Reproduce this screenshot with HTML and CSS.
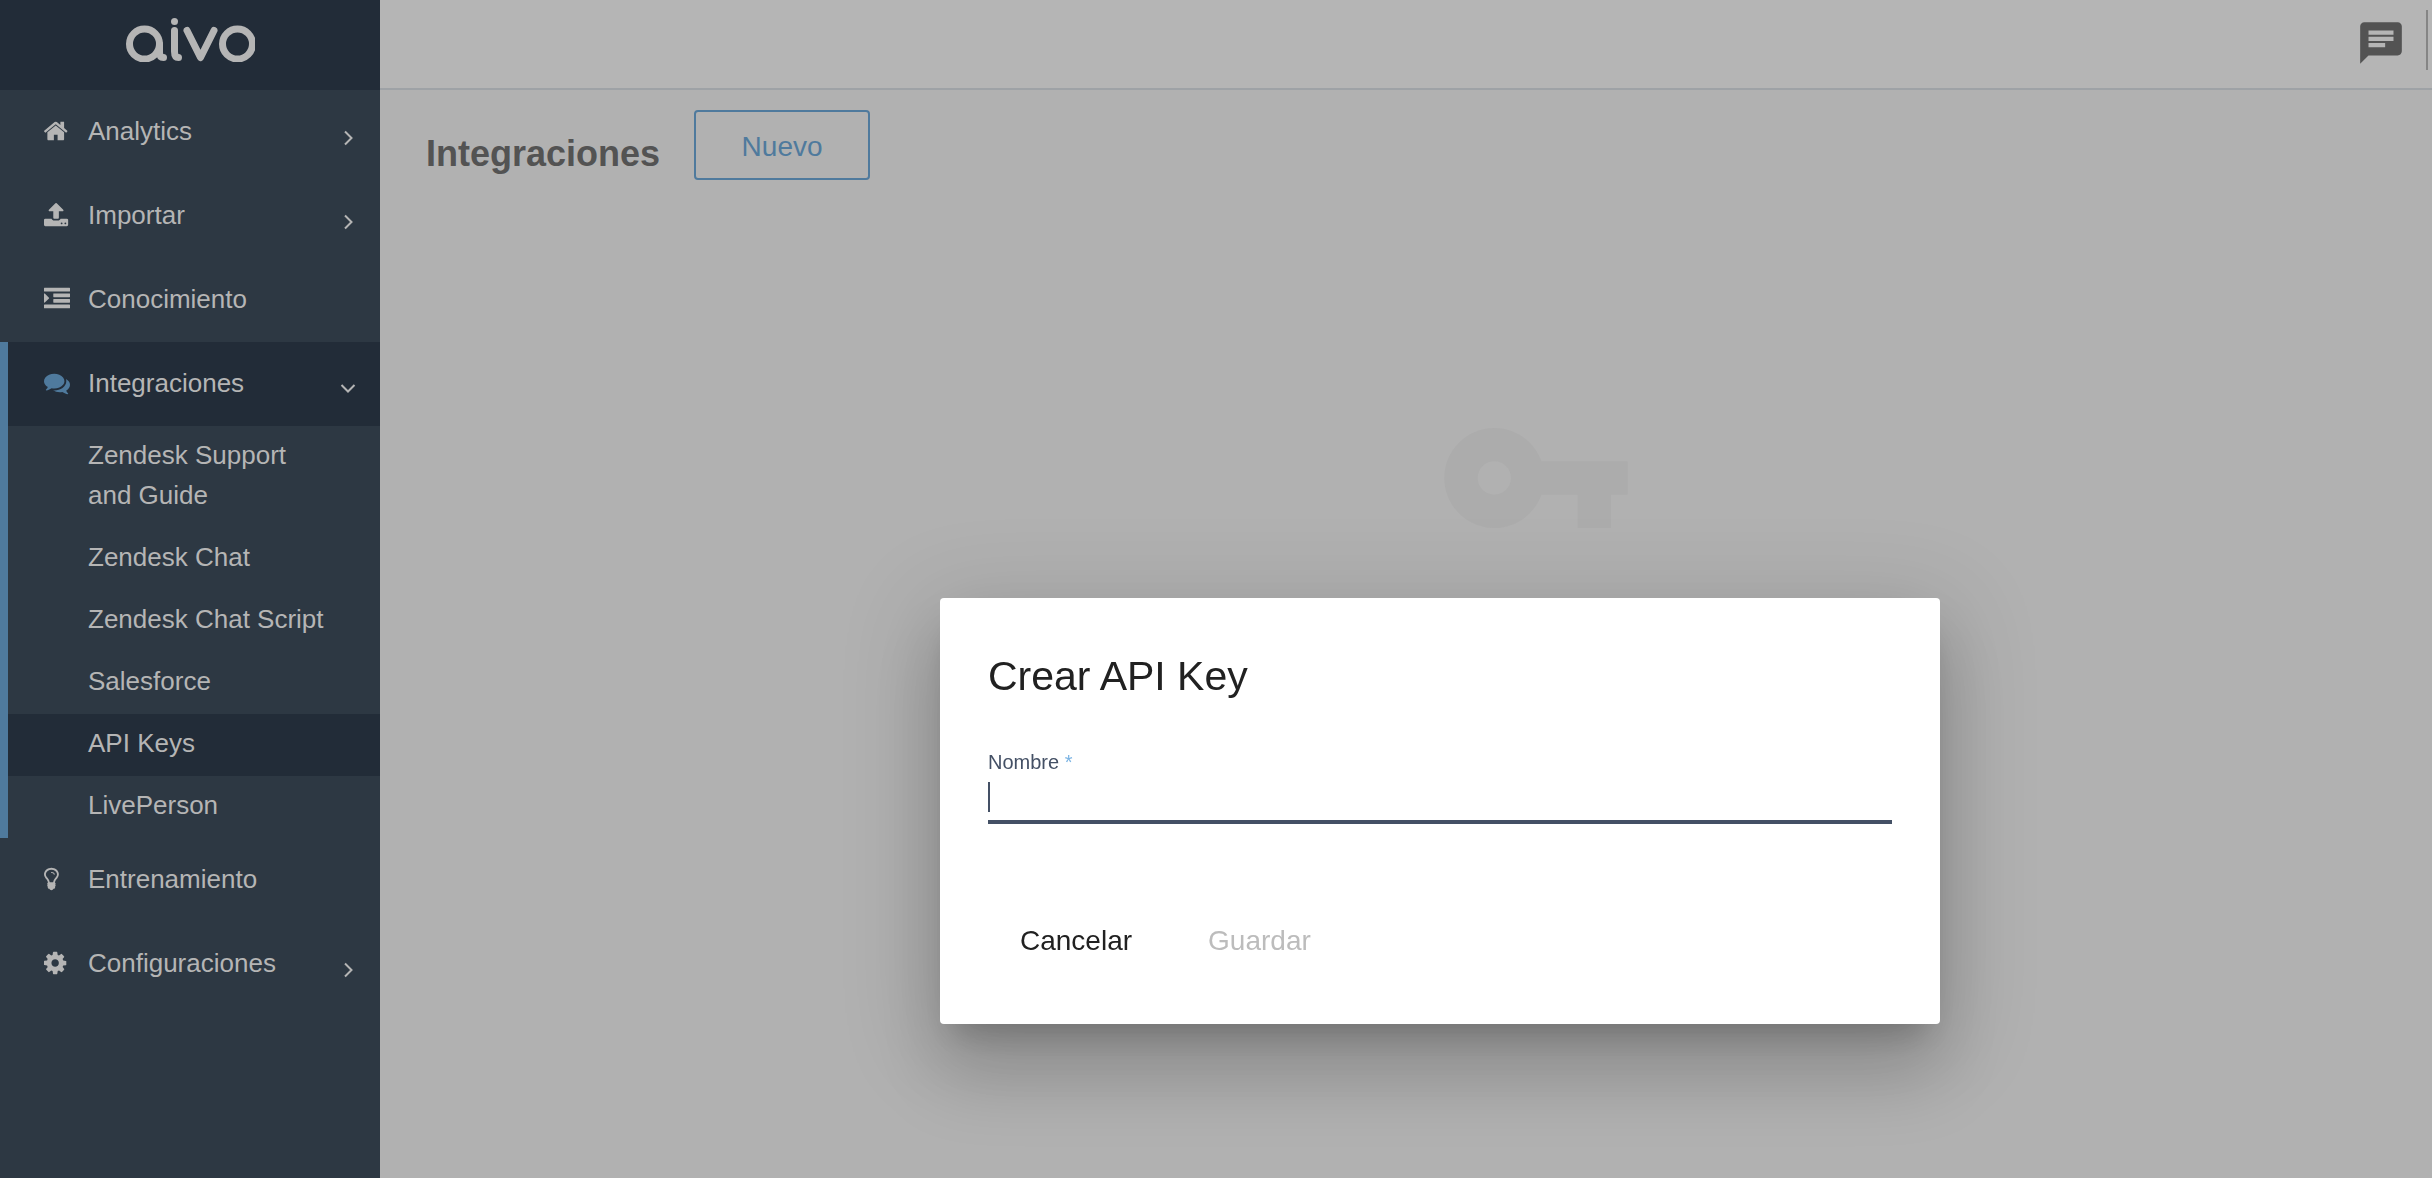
FILE: index.html
```html
<!DOCTYPE html>
<html lang="es">
<head>
<meta charset="utf-8">
<title>Aivo - API Keys</title>
<meta name="viewport" content="width=device-width, initial-scale=1">
<link rel="stylesheet" href="styles.css">
</head>
<body>
<div class="app">
  <aside class="sidebar">
    <a class="brand" href="#" aria-label="aivo">
      <svg class="logo" viewBox="125 18 130 44" aria-hidden="true">
        <g fill="none" stroke="currentColor" stroke-width="7" stroke-linecap="round" stroke-linejoin="round">
          <circle cx="144.500" cy="44" r="15"/>
          <path d="M159.500 44v8q0 5.500 4 5.500"/>
          <path d="M174.500 30.500v21q0 6 4 6"/>
          <path d="M187 30.500l13.500 27 13.500-27"/>
          <circle cx="237.500" cy="44" r="15"/>
        </g>
        <circle cx="174.500" cy="21.500" r="3.500" fill="currentColor"/>
      </svg>
    </a>
    <nav class="menu">
      <a class="item" href="#">
        <svg class="icon" viewBox="87 0 1792 1792" aria-hidden="true"><path d="M1472 992v480q0 26-19 45t-45 19h-384v-384h-256v384h-384q-26 0-45-19t-19-45v-480q0-1 .5-3t.5-3l575-474 575 474q1 2 1 6zm223-69l-62 74q-8 9-21 11h-3q-13 0-21-7l-692-577-692 577q-12 8-24 7-13-2-21-11l-62-74q-8-10-7-23.500t11-21.500l719-599q32-26 76-26t76 26l244 204v-195q0-14 9-23t23-9h192q14 0 23 9t9 23v408l219 182q10 8 11 21.500t-7 23.500z"/></svg>
        <span class="label">Analytics</span>
        <svg class="chevron" viewBox="0 0 16 16" aria-hidden="true"><path d="M5 1.500l6.500 6.500-6.500 6.500"/></svg>
      </a>
      <a class="item" href="#">
        <svg class="icon" viewBox="64 0 1792 1792" aria-hidden="true"><path d="M1344 1472q0-26-19-45t-45-19-45 19-19 45 19 45 45 19 45-19 19-45zm256 0q0-26-19-45t-45-19-45 19-19 45 19 45 45 19 45-19 19-45zm128-224v320q0 40-28 68t-68 28h-1472q-40 0-68-28t-28-68v-320q0-40 28-68t68-28h427q21 56 70.500 92t110.500 36h256q61 0 110.500-36t70.500-92h427q40 0 68 28t28 68zm-325-648q-17 40-59 40h-256v448q0 26-19 45t-45 19h-256q-26 0-45-19t-19-45v-448h-256q-42 0-59-40-17-39 14-69l448-448q18-19 45-19t45 19l448 448q31 30 14 69z"/></svg>
        <span class="label">Importar</span>
        <svg class="chevron" viewBox="0 0 16 16" aria-hidden="true"><path d="M5 1.500l6.500 6.500-6.500 6.500"/></svg>
      </a>
      <a class="item" href="#">
        <svg class="icon" viewBox="0 0 1792 1792" aria-hidden="true"><path d="M352 832q0 14-9 23l-288 288q-9 9-23 9-13 0-22.500-9.500t-9.500-22.500v-576q0-13 9.500-22.500t22.500-9.500q14 0 23 9l288 288q9 9 9 23zm1440 480v192q0 13-9.500 22.500t-22.500 9.500h-1728q-13 0-22.500-9.500t-9.500-22.500v-192q0-13 9.500-22.500t22.500-9.500h1728q13 0 22.500 9.500t9.500 22.500zm0-384v192q0 13-9.500 22.500t-22.500 9.500h-1088q-13 0-22.500-9.500t-9.500-22.500v-192q0-13 9.500-22.500t22.500-9.500h1088q13 0 22.500 9.500t9.500 22.500zm0-384v192q0 13-9.500 22.500t-22.500 9.500h-1088q-13 0-22.500-9.500t-9.500-22.500v-192q0-13 9.500-22.500t22.500-9.500h1088q13 0 22.500 9.500t9.500 22.500zm0-384v192q0 13-9.500 22.500t-22.500 9.500h-1728q-13 0-22.500-9.500t-9.500-22.500v-192q0-13 9.500-22.500t22.500-9.500h1728q13 0 22.500 9.500t9.500 22.500z"/></svg>
        <span class="label">Conocimiento</span>
      </a>
      <div class="group">
        <a class="item item-open" href="#">
          <svg class="icon" viewBox="0 0 1792 1792" aria-hidden="true"><path d="M1408 768q0 139-94 257t-256.500 186.500-353.500 68.500q-86 0-176-16-124 88-278 128-36 9-86 16h-3q-11 0-20.500-8t-11.500-21q-1-3-1-6.500t.5-6.500 2-6l2.500-5 3.500-5.500 4-5 4.500-5 4-4.500q5-6 23-25t26-29.500 22.500-29 25-38.500 20.500-44q-124-72-195-177t-71-224q0-139 94-257t256.500-186.500 353.500-68.500 353.500 68.500 256.500 186.500 94 257zm384 256q0 120-71 224.500t-195 176.500q10 24 20.500 44t25 38.500 22.500 29 26 29.500 23 25q1 1 4 4.500t4.500 5 4 5 3.500 5.500l2.500 5 2 6 .5 6.500-1 6.500q-3 14-13 22t-22 7q-50-7-86-16-154-40-278-128-90 16-176 16-271 0-472-132 58 4 88 4 161 0 309-45t264-129q125-92 192-212t67-254q0-77-23-152 129 71 204 178t75 230z"/></svg>
          <span class="label">Integraciones</span>
          <svg class="chevron" viewBox="0 0 16 16" aria-hidden="true"><path d="M1.500 3l6.500 6.500 6.500-6.500"/></svg>
        </a>
        <a class="subitem" href="#">Zendesk Support and Guide</a>
        <a class="subitem" href="#">Zendesk Chat</a>
        <a class="subitem" href="#">Zendesk Chat Script</a>
        <a class="subitem" href="#">Salesforce</a>
        <a class="subitem subitem-active" href="#" aria-current="page">API Keys</a>
        <a class="subitem" href="#">LivePerson</a>
      </div>
      <a class="item" href="#">
        <svg class="icon" viewBox="384 0 1792 1792" aria-hidden="true"><path d="M1120 576q0 13-9.500 22.500t-22.500 9.500-22.500-9.500-9.500-22.500q0-46-54-71t-106-25q-13 0-22.500-9.500t-9.500-22.500 9.500-22.500 22.500-9.500q50 0 99.500 16t87 54 37.500 90zm160 0q0-72-34.500-134t-90-101.500-123-62-136.500-22.500-136.500 22.500-123 62-90 101.500-34.500 134q0 101 68 180 10 11 30.500 33t30.500 33q128 153 141 298h228q13-145 141-298 10-11 30.500-33t30.500-33q68-79 68-180zm128 0q0 155-103 268-45 49-74.500 87t-59.500 95.500-34 107.500q47 28 47 82 0 37-25 64 25 27 25 64 0 52-45 81 13 23 13 47 0 46-31.500 71t-77.500 25q-20 44-60 70t-87 26-87-26-60-70q-46 0-77.500-25t-31.500-71q0-24 13-47-45-29-45-81 0-37 25-64-25-27-25-64 0-54 47-82-4-50-34-107.500t-59.500-95.500-74.500-87q-103-113-103-268 0-99 44.500-184.500t117-142 164-89 186.500-32.500 186.500 32.500 164 89 117 142 44.500 184.500z"/></svg>
        <span class="label">Entrenamiento</span>
      </a>
      <a class="item" href="#">
        <svg class="icon" viewBox="128 0 1792 1792" aria-hidden="true"><path d="M1152 896q0-106-75-181t-181-75-181 75-75 181 75 181 181 75 181-75 75-181zm512-109v222q0 12-8 23t-20 13l-185 28q-19 54-39 91 35 50 107 138 10 12 10 25t-9 23q-27 37-99 108t-94 71q-12 0-26-9l-138-108q-44 23-91 38-16 136-29 186-7 28-36 28h-222q-14 0-24.500-8.500t-11.500-21.500l-28-184q-49-16-90-37l-141 107q-10 9-25 9-14 0-25-11-126-114-165-168-7-10-7-23 0-12 8-23 15-21 51-66.500t54-70.500q-27-50-41-99l-183-27q-13-2-21-12.500t-8-23.500v-222q0-12 8-23t19-13l186-28q14-46 39-92-40-57-107-138-10-12-10-24 0-10 9-23 26-36 98.500-107.500t94.500-71.500q13 0 26 10l138 107q44-23 91-38 16-136 29-186 7-28 36-28h222q14 0 24.500 8.500t11.500 21.500l28 184q49 16 90 37l142-107q9-9 24-9 13 0 25 10 129 119 165 170 7 8 7 22 0 12-8 23-15 21-51 66.500t-54 70.500q26 50 41 98l183 28q13 2 21 12.500t8 23.500z"/></svg>
        <span class="label">Configuraciones</span>
        <svg class="chevron" viewBox="0 0 16 16" aria-hidden="true"><path d="M5 1.500l6.500 6.500-6.500 6.500"/></svg>
      </a>
    </nav>
  </aside>

  <div class="page">
    <header class="topbar">
      <button class="chat" type="button" aria-label="Chat">
        <svg viewBox="0 0 24 24" aria-hidden="true"><path d="M20 2H4c-1.100 0-1.990.9-1.990 2L2 22l4-4h14c1.100 0 2-.9 2-2V4c0-1.100-.9-2-2-2zM6 9h12v2H6V9zm8 5H6v-2h8v2zm4-6H6V6h12v2z"/></svg>
      </button>
      <span class="divider"></span>
    </header>
    <main class="content">
      <div class="heading">
        <h1 class="title">Integraciones</h1>
        <button class="new" type="button">Nuevo</button>
      </div>
      <div class="empty">
        <svg class="key" viewBox="0 0 24 24" aria-hidden="true"><path d="M12.650 10C11.830 7.670 9.610 6 7 6c-3.310 0-6 2.690-6 6s2.690 6 6 6c2.610 0 4.830-1.670 5.650-4H17v4h4v-4h2v-4H12.650zM7 14c-1.100 0-2-.9-2-2s.9-2 2-2 2 .9 2 2-.9 2-2 2z"/></svg>
      </div>
    </main>
  </div>
</div>

<div class="overlay">
  <form class="dialog" role="dialog" aria-modal="true" aria-labelledby="dialog-title">
    <h2 class="dialog-title" id="dialog-title">Crear API Key</h2>
    <label class="field-label" for="name">Nombre <span class="required">*</span></label>
    <div class="field">
      <span class="caret"></span>
      <input class="field-input" id="name" type="text" autocomplete="off">
    </div>
    <div class="actions">
      <button class="action" type="button">Cancelar</button>
      <button class="action" type="submit" disabled>Guardar</button>
    </div>
  </form>
</div>
</body>
</html>
```
FILE: styles.css
```css
* {
  box-sizing: border-box;
}

body {
  margin: 0;
  font-family: "Liberation Sans", Arial, sans-serif;
  font-size: 26px;
  background: #b1b1b1;
}

button,
input {
  font: inherit;
}

a {
  color: inherit;
  text-decoration: none;
}

.app {
  display: grid;
  grid-template-columns: 380px 1fr;
  min-height: 100vh;
}

/* Sidebar */
.sidebar {
  background: #2d3843;
  color: #b5b5b5;
}

.brand {
  display: flex;
  justify-content: center;
  height: 90px;
  padding-top: 18px;
  background: #222c38;
}

.logo {
  width: 130px;
  height: 44px;
}

.item {
  display: flex;
  align-items: center;
  gap: 18px;
  height: 84px;
  padding: 0 24px 2px 44px;
}

.icon {
  width: 26px;
  height: 26px;
  fill: currentColor;
}

.label {
  flex: 1;
}

.chevron {
  width: 16px;
  height: 16px;
  margin-top: 14px;
  fill: none;
  stroke: currentColor;
  stroke-width: 2;
}

.group {
  border-left: 8px solid #4f7a9d;
}

.group .item,
.subitem-active {
  background: #222c38;
}

.group .item {
  padding-left: 36px;
}

.item-open .icon {
  color: #4f7a9d;
}

.subitem {
  display: block;
  padding: 9px 48px 13px 80px;
  line-height: 40px;
}

/* Page */
.topbar {
  display: flex;
  justify-content: flex-end;
  gap: 20px;
  height: 90px;
  padding: 10px 4px 0 0;
  border-bottom: 2px solid #9ea2a6;
  background: #b5b5b5;
}

.chat {
  width: 50px;
  height: 50px;
  margin-top: 8px;
  padding: 0;
  border: 0;
  background: none;
}

.chat svg {
  display: block;
  fill: #535353;
}

.divider {
  width: 2px;
  height: 60px;
  background: #858585;
}

.content {
  padding: 20px 46px;
}

.heading {
  display: flex;
  align-items: flex-start;
  gap: 34px;
}

.title {
  margin: 0;
  padding-top: 22px;
  font-size: 36px;
  line-height: 44px;
  color: #535353;
}

.new {
  min-width: 176px;
  height: 70px;
  padding-top: 4px;
  border: 2px solid #4f7a9d;
  border-radius: 4px;
  background: none;
  color: #4f7a9d;
  font-size: 28px;
}

.empty {
  display: flex;
  justify-content: center;
  padding: 198px 0 0 260px;
}

.key {
  width: 200px;
  height: 200px;
  fill: #acacac;
}

/* Dialog */
.overlay {
  position: fixed;
  inset: 0;
  display: flex;
  align-items: center;
  justify-content: center;
  padding: 444px 0 0 448px;
}

.dialog {
  width: 1000px;
  padding: 48px;
  border-radius: 4px;
  background: #fff;
  color: #212121;
  box-shadow:
    0 22px 30px -14px rgba(0, 0, 0, 0.2),
    0 48px 76px 6px rgba(0, 0, 0, 0.14),
    0 18px 92px 16px rgba(0, 0, 0, 0.12);
}

.dialog-title {
  margin: 0 0 44px;
  font-size: 41px;
  font-weight: 400;
  line-height: 60px;
}

.field-label {
  display: block;
  font-size: 20px;
  line-height: 24px;
  color: #445065;
}

.required {
  color: #7ab3e3;
}

.field {
  display: flex;
  padding: 8px 0;
  border-bottom: 4px solid #445065;
}

.caret {
  width: 2px;
  background: #445065;
}

.field-input {
  flex: 1;
  height: 30px;
  padding: 0;
  border: 0;
  outline: 0;
  background: none;
  color: inherit;
}

.actions {
  display: flex;
  gap: 12px;
  margin-top: 80px;
}

.action {
  height: 72px;
  padding: 2px 32px 0;
  border: 0;
  background: none;
  color: #212121;
  font-size: 28px;
}

.action:disabled {
  color: #bcbcbc;
}
```
